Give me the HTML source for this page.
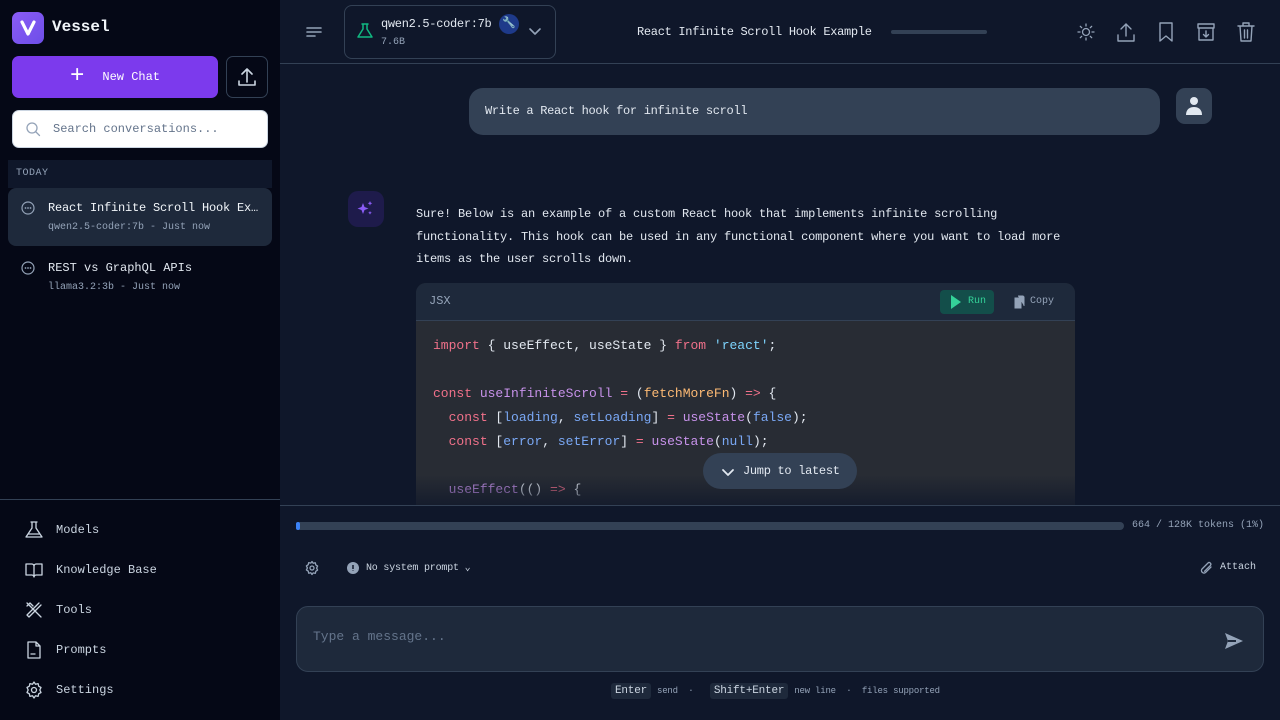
<!DOCTYPE html>
<html><head><meta charset="utf-8"><style>
*{box-sizing:border-box;margin:0;padding:0}
body{width:1280px;height:720px;overflow:hidden;background:#0f172a;font-family:"Liberation Mono",monospace;color:#e2e8f0;position:relative}
.sb{position:absolute;left:0;top:0;width:280px;height:720px;background:#050816}
.abs{position:absolute}
svg{display:block}
.ic{fill:none;stroke:currentColor;stroke-width:1.6;stroke-linecap:round;stroke-linejoin:round}
.nav{position:absolute;left:24px;display:flex;align-items:center;gap:12px;font-size:12px;color:#cbd5e1}
.code{font-size:13px;line-height:24px;white-space:pre;color:#e2e8f0}
.k{color:#f0718a}.f{color:#c792ea}.s{color:#7dd3fc}.v{color:#7aa8f5}.p{color:#fdba74}
</style></head><body>
<div class="sb">
  <div class="abs" style="left:12px;top:12px;width:32px;height:32px;border-radius:7px;background:linear-gradient(135deg,#8b5cf6,#6d4ee8);"><svg width="32" height="32"><path d="M10 10l6 12 6-12" fill="none" stroke="#fff" stroke-width="3.2" stroke-linecap="round" stroke-linejoin="round"/></svg></div>
  <div class="abs" style="left:52px;top:18px;font-size:16px;font-weight:bold;color:#f1f5f9">Vessel</div>
  <div class="abs" style="left:12px;top:56px;width:206px;height:42px;border-radius:7px;background:#7c3aed;color:#fff;font-size:12px;display:flex;align-items:center;justify-content:center;gap:18px"><span style="font-size:24px;font-weight:300;line-height:1">+</span>New Chat</div>
  <div class="abs" style="left:226px;top:56px;width:42px;height:42px;border-radius:7px;border:1px solid #334155;color:#cbd5e1"><svg width="40" height="40" class="ic"><path d="M20 12v13M15 17l5-5 5 5M12 24v4h16v-4"/></svg></div>
  <div class="abs" style="left:12px;top:110px;width:256px;height:38px;border-radius:7px;background:#fff;border:1px solid #cbd5e1;"><svg width="30" height="36" class="ic" style="position:absolute;left:6px;top:0;color:#94a3b8;stroke-width:1.3"><circle cx="13" cy="17" r="5"/><path d="M17 21l3.5 3.5"/></svg><span style="position:absolute;left:40px;top:11px;font-size:12px;color:#64748b">Search conversations...</span></div>
  <div class="abs" style="left:8px;top:160px;width:264px;height:28px;background:#0f172a;font-size:10px;color:#94a3b8;padding:8px 8px;letter-spacing:.5px">TODAY</div>
  <div class="abs" style="left:8px;top:188px;width:264px;height:58px;background:#1e293b;border-radius:8px"></div>
  <svg class="abs ic" style="left:20px;top:200px;color:#94a3b8;stroke-width:1.2" width="16" height="16"><circle cx="8" cy="8" r="6"/><path d="M5.5 8h0M8 8h0M10.5 8h0" stroke-width="1.8"/></svg>
  <div class="abs" style="left:48px;top:201px;font-size:12px;color:#f1f5f9;letter-spacing:-0.2px">React Infinite Scroll Hook Ex…</div>
  <div class="abs" style="left:48px;top:222px;font-size:10px;color:#94a3b8">qwen2.5-coder:7b - Just now</div>
  <svg class="abs ic" style="left:20px;top:260px;color:#94a3b8;stroke-width:1.2" width="16" height="16"><circle cx="8" cy="8" r="6"/><path d="M5.5 8h0M8 8h0M10.5 8h0" stroke-width="1.8"/></svg>
  <div class="abs" style="left:48px;top:261px;font-size:12px;color:#e2e8f0">REST vs GraphQL APIs</div>
  <div class="abs" style="left:48px;top:282px;font-size:10px;color:#94a3b8">llama3.2:3b - Just now</div>
  <div class="abs" style="left:0;top:499px;width:280px;height:1px;background:#334155"></div>
  <div class="nav" style="top:520px"><svg width="20" height="20" class="ic" style="stroke-width:1.3"><path d="M7 2h6M8 2v6l-6 9h16l-6-9V2M4 14h12"/></svg>Models</div>
  <div class="nav" style="top:560px"><svg width="20" height="20" class="ic" style="stroke-width:1.3"><path d="M2 4h6c1 0 2 1 2 2v11c0-1-1-2-2-2H2zM18 4h-6c-1 0-2 1-2 2v11c0-1 1-2 2-2h6z"/></svg>Knowledge Base</div>
  <div class="nav" style="top:600px"><svg width="20" height="20" class="ic" style="stroke-width:1.3"><path d="M3 3l14 14M15 3l-12 12 2 2 12-12M3 6l3-3 3 3M14 14l3 3"/></svg>Tools</div>
  <div class="nav" style="top:640px"><svg width="20" height="20" class="ic" style="stroke-width:1.3"><path d="M4 2h8l4 4v12H4zM12 2v4h4M7 14h4"/></svg>Prompts</div>
  <div class="nav" style="top:680px"><svg width="20" height="20" class="ic" style="stroke-width:1.3"><circle cx="10" cy="10" r="2.5"/><path d="M10 2l1.5 2.2 2.6-.6.6 2.6L17 7.5l-1.2 2.5 1.2 2.5-2.3 1.3-.6 2.6-2.6-.6L10 18l-1.5-2.2-2.6.6-.6-2.6L3 12.5 4.2 10 3 7.5l2.3-1.3.6-2.6 2.6.6z"/></svg>Settings</div>
</div>

<!-- header -->
<div class="abs" style="left:280px;top:63px;width:1000px;height:1px;background:#334155"></div>
<svg class="abs ic" style="left:304px;top:22px;color:#94a3b8" width="20" height="20"><path d="M3 6h14M3 10h14M3 14h8"/></svg>
<div class="abs" style="left:344px;top:5px;width:212px;height:54px;border:1px solid #334155;border-radius:8px"></div>
<svg class="abs ic" style="left:356px;top:22px;color:#10b981;stroke-width:1.5" width="18" height="18"><path d="M6 2h6M7 2v5l-5 8h14l-5-8V2"/></svg>
<div class="abs" style="left:381px;top:17px;font-size:12px;color:#e2e8f0;letter-spacing:-0.3px">qwen2.5-coder:7b</div>
<div class="abs" style="left:499px;top:14px;width:20px;height:20px;border-radius:10px;background:#1e3a8a;font-size:11px;text-align:center;line-height:20px">🔧</div>
<div class="abs" style="left:381px;top:37px;font-size:10px;color:#94a3b8">7.6B</div>
<svg class="abs ic" style="left:527px;top:25px;color:#94a3b8" width="16" height="14"><path d="M3 4l5 5 5-5"/></svg>
<div class="abs" style="left:637px;top:25px;font-size:12px;color:#e2e8f0;letter-spacing:-0.3px">React Infinite Scroll Hook Example</div>
<div class="abs" style="left:891px;top:30px;width:96px;height:4px;border-radius:2px;background:#334155"></div>
<svg class="abs ic" style="left:1076px;top:22px;color:#94a3b8;stroke-width:1.3" width="20" height="20"><circle cx="10" cy="10" r="3.5"/><path d="M10 2v2M10 16v2M2 10h2M16 10h2M4.3 4.3l1.4 1.4M14.3 14.3l1.4 1.4M4.3 15.7l1.4-1.4M14.3 5.7l1.4-1.4"/></svg>
<svg class="abs ic" style="left:1116px;top:21px;color:#94a3b8;stroke-width:1.4" width="20" height="22"><path d="M10 3v12M5 8l5-5 5 5M2 14v6h16v-6"/></svg>
<svg class="abs ic" style="left:1156px;top:21px;color:#94a3b8;stroke-width:1.4" width="20" height="22"><path d="M4 2h12v18l-6-5-6 5z"/></svg>
<svg class="abs ic" style="left:1196px;top:21px;color:#94a3b8;stroke-width:1.4" width="20" height="22"><path d="M2 3h16v4H2zM3 7v12h14V7M10 10v6M7.5 13.5L10 16l2.5-2.5"/></svg>
<svg class="abs ic" style="left:1236px;top:21px;color:#94a3b8;stroke-width:1.4" width="20" height="22"><path d="M2 5h16M7 5V2h6v3M4 5l1 15h10l1-15M8.5 9v8M11.5 9v8"/></svg>

<!-- user msg -->
<div class="abs" style="left:469px;top:88px;width:691px;height:47px;border-radius:14px;background:#334155;font-size:12px;padding:16px 16px;color:#e2e8f0;letter-spacing:-0.3px">Write a React hook for infinite scroll</div>
<div class="abs" style="left:1176px;top:88px;width:36px;height:36px;border-radius:9px;background:#334155"><svg width="36" height="36"><circle cx="18" cy="13" r="4" fill="#e2e8f0"/><path d="M10 27c0-6 4-8 8-8s8 2 8 8z" fill="#e2e8f0"/></svg></div>

<!-- assistant -->
<div class="abs" style="left:348px;top:191px;width:36px;height:36px;border-radius:10px;background:#1e1b4b"><svg width="36" height="36"><path d="M15 12l1.5 4 4 1.5-4 1.5L15 23l-1.5-4-4-1.5 4-1.5z" fill="#8b5cf6"/><path d="M22 10l.7 1.6 1.6.7-1.6.7L22 14.6l-.7-1.6-1.6-.7 1.6-.7zM22 20l.6 1.2 1.2.6-1.2.6-.6 1.2-.6-1.2-1.2-.6 1.2-.6z" fill="#8b5cf6"/></svg></div>
<div class="abs" style="left:416px;top:203px;width:660px;font-size:12px;line-height:22.5px;color:#e2e8f0;letter-spacing:-0.2px">Sure! Below is an example of a custom React hook that implements infinite scrolling functionality. This hook can be used in any functional component where you want to load more items as the user scrolls down.</div>
<div class="abs" style="left:416px;top:283px;width:659px;height:222px;border-radius:10px 10px 0 0;background:#282c34;overflow:hidden">
  <div style="height:38px;background:#1e293b;border-bottom:1px solid #334155;position:relative">
    <span style="position:absolute;left:13px;top:11px;font-size:12px;color:#94a3b8">JSX</span>
    <div style="position:absolute;left:524px;top:7px;width:54px;height:24px;border-radius:4px;background:#134e4a;color:#34d399;font-size:10px;line-height:24px;padding-left:28px"><svg width="12" height="14" style="position:absolute;left:10px;top:5px"><path d="M1 0l10 7-10 7z" fill="#34d399"/></svg>Run</div>
    <div style="position:absolute;left:596px;top:13px;font-size:10px;color:#94a3b8;padding-left:18px"><svg width="14" height="14" style="position:absolute;left:0;top:-1px"><path d="M3 3h6v10H3zM6 1h5l1 1v9" fill="#94a3b8" stroke="#94a3b8"/></svg>Copy</div>
  </div>
  <div class="code" style="padding:13px 17px"><span class="k">import</span> { useEffect, useState } <span class="k">from</span> <span class="s">'react'</span>;

<span class="k">const</span> <span class="f">useInfiniteScroll</span> <span class="k">=</span> (<span class="p">fetchMoreFn</span>) <span class="k">=&gt;</span> {
  <span class="k">const</span> [<span class="v">loading</span>, <span class="v">setLoading</span>] <span class="k">=</span> <span class="f">useState</span>(<span class="v">false</span>);
  <span class="k">const</span> [<span class="v">error</span>, <span class="v">setError</span>] <span class="k">=</span> <span class="f">useState</span>(<span class="v">null</span>);

  <span class="f">useEffect</span>(() <span class="k">=&gt;</span> {</div>
</div>
<div class="abs" style="left:280px;top:475px;width:1000px;height:30px;background:linear-gradient(rgba(15,23,42,0),rgba(15,23,42,.75))"></div>
<div class="abs" style="left:703px;top:453px;width:154px;height:36px;border-radius:18px;background:#334155;font-size:12px;color:#e2e8f0;line-height:36px;padding-left:40px;letter-spacing:-0.3px"><svg width="14" height="10" class="ic" style="position:absolute;left:18px;top:15px;stroke-width:1.8"><path d="M2 2l5 5 5-5"/></svg>Jump to latest</div>

<!-- bottom -->
<div class="abs" style="left:280px;top:505px;width:1000px;height:1px;background:#334155"></div>
<div class="abs" style="left:296px;top:522px;width:828px;height:8px;border-radius:4px;background:#334155"><div style="width:4px;height:8px;border-radius:4px;background:#3b82f6"></div></div>
<div class="abs" style="left:1132px;top:520px;font-size:10px;color:#94a3b8">664 / 128K tokens (1%)</div>
<svg class="abs ic" style="left:304px;top:560px;color:#94a3b8;stroke-width:1.3" width="16" height="16"><circle cx="8" cy="8" r="2"/><path d="M8 1.5l1.2 1.8 2.1-.5.5 2.1 1.8 1.2-1 2 1 2-1.8 1.2-.5 2.1-2.1-.5L8 14.5l-1.2-1.8-2.1.5-.5-2.1L2.4 9.9l1-2-1-2 1.8-1.2.5-2.1 2.1.5z"/></svg>
<svg class="abs" style="left:347px;top:562px" width="12" height="12"><circle cx="6" cy="6" r="6" fill="#94a3b8"/><path d="M6 3v4M6 8.5v.5" stroke="#0f172a" stroke-width="1.5"/></svg>
<div class="abs" style="left:366px;top:562px;font-size:10px;color:#cbd5e1;letter-spacing:-0.2px">No system prompt ⌄</div>
<svg class="abs ic" style="left:1199px;top:561px;color:#94a3b8;stroke-width:1.3" width="14" height="14"><path d="M12 6l-5.5 5.5a2.5 2.5 0 01-3.5-3.5L9 2a1.7 1.7 0 012.4 2.4L5.5 10.3"/></svg>
<div class="abs" style="left:1220px;top:562px;font-size:10px;color:#cbd5e1">Attach</div>
<div class="abs" style="left:296px;top:606px;width:968px;height:66px;border-radius:12px;background:#1e293b;border:1px solid #334155"></div>
<div class="abs" style="left:313px;top:629px;font-size:13px;color:#64748b">Type a message...</div>
<svg class="abs" style="left:1224px;top:632px" width="20" height="18"><path d="M1 1l18 8-18 8 3-8z" fill="#94a3b8"/><path d="M4 9h8" stroke="#1e293b" stroke-width="2"/></svg>
<div class="abs" style="left:611px;top:683px;font-size:9px;color:#94a3b8;display:flex;align-items:center;gap:6px;white-space:pre;letter-spacing:-0.2px"><span style="background:#1e293b;color:#cbd5e1;font-size:11px;padding:2px 4px;border-radius:3px">Enter</span>send  ·  <span style="background:#1e293b;color:#cbd5e1;font-size:11px;padding:2px 4px;border-radius:3px">Shift+Enter</span>new line  ·  files supported</div>
</body></html>
